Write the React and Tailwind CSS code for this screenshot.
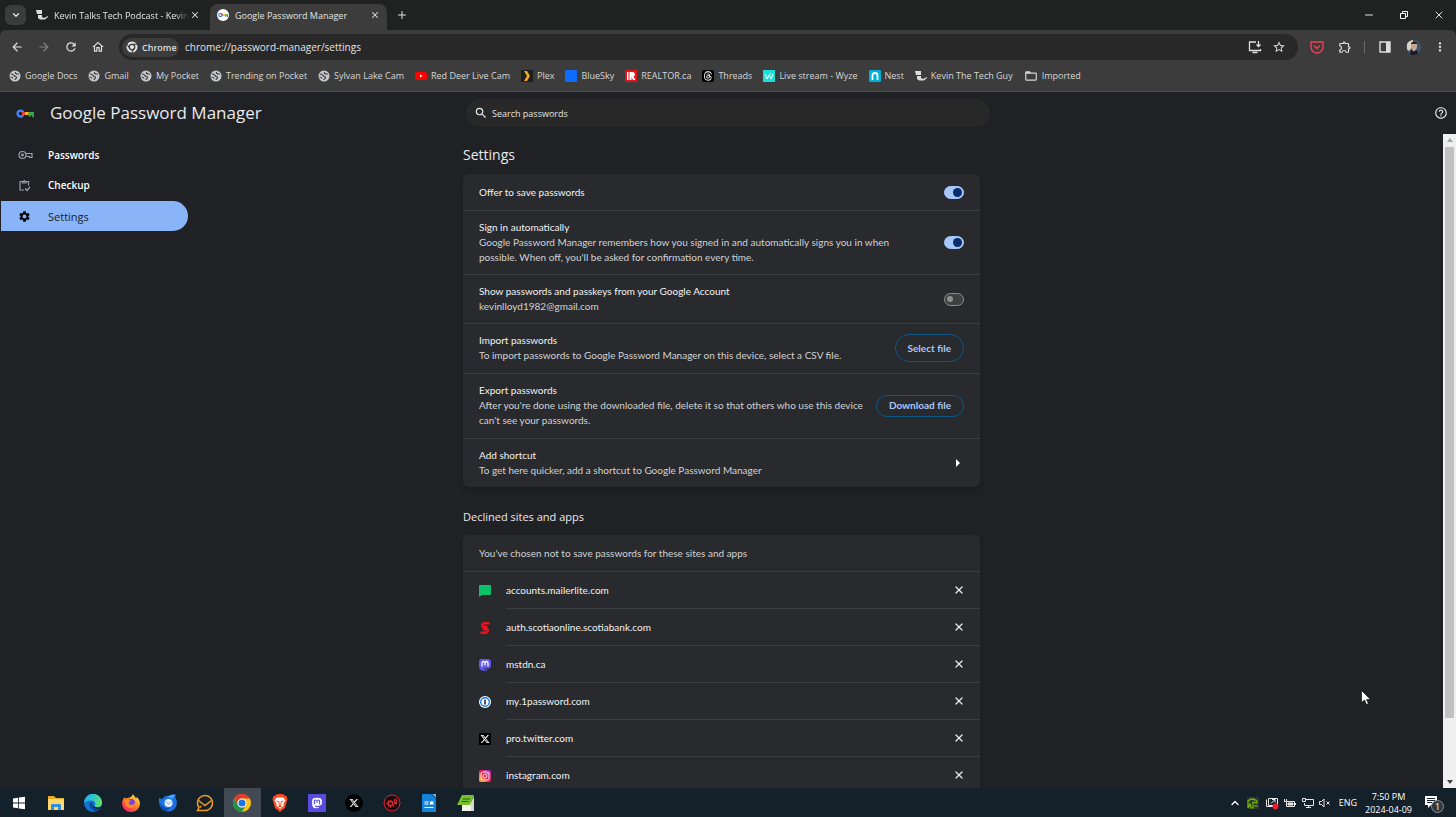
import React, { useState } from 'react';
import { ChevronDown, ChevronUp, Minus, Plus, X } from 'lucide-react';
import {
  MdArrowBack,
  MdArrowForward,
  MdFolderOpen,
  MdHelpOutline,
  MdMoreVert,
  MdOutlineExtension,
  MdOutlineHome,
  MdRefresh,
  MdSearch,
  MdSettings,
  MdStarBorder,
} from 'react-icons/md';
import { FaInstagram, FaMastodon, FaThreads, FaXTwitter } from 'react-icons/fa6';

/* ---------- site and app icons ---------- */

const GlobeIcon = () => (
  <svg viewBox="0 0 24 24" className="h-3 w-3 shrink-0">
    <circle cx="12" cy="12" r="11" fill="#c7c9cc" />
    <path d="M4 7c2 3 5 1 6 4s5 1 5 4-3 2-3 5M13 4c-1 3 1 4 4 4h3M3 14c2 0 4 0 5 3" fill="none" stroke="#3c3c3c" strokeWidth="2.400" />
  </svg>
);

const PodcastIcon = () => (
  <svg viewBox="0 0 12 12" className="h-3 w-3 shrink-0" fill="#dcdcdc">
    <path d="M0 1h6v4H1z" />
    <path d="M2 6h4v2l2 1 4-2v1L9 10.500H4L2 9z" />
  </svg>
);

const KeyLogo = ({ className }) => (
  <svg viewBox="0 0 24 12" className={className}>
    <circle cx="6" cy="6" r="4" fill="none" stroke="#4285f4" strokeWidth="3" />
    <path d="M8 4h4v4H8z" fill="#ea4335" />
    <path d="M12 4h5v4h-5z" fill="#fbbc04" />
    <path d="M17 4h7v7h-2.500V8H20v2h-3z" fill="#34a853" />
  </svg>
);

const ChromeMark = () => (
  <svg viewBox="0 0 24 24" className="h-3 w-3 shrink-0">
    <circle cx="12" cy="12" r="11" fill="#e3e3e3" />
    <circle cx="12" cy="12" r="5.500" fill="#e3e3e3" stroke="#3c3c3c" strokeWidth="2.500" />
    <path d="M12 6.500h10M7.200 14.500 2.300 6.500M16.800 14.500 11.500 23" stroke="#3c3c3c" strokeWidth="2.200" />
  </svg>
);

const YoutubeIcon = () => (
  <svg viewBox="0 0 12 12" className="h-3 w-3 shrink-0">
    <rect y="2" width="12" height="8" rx="2" fill="#f00" />
    <path d="M5 4.500v3L7.600 6z" fill="#fff" />
  </svg>
);

const PlexIcon = () => (
  <svg viewBox="0 0 12 12" className="h-3 w-3 shrink-0">
    <rect width="12" height="12" fill="#1f1f1f" />
    <path d="M3 1h3l3 5-3 5H3l3-5z" fill="#f5a623" />
  </svg>
);

const BlueSkyIcon = () => (
  <svg viewBox="0 0 12 12" className="h-3 w-3 shrink-0">
    <rect width="12" height="12" rx="1" fill="#0a6dff" />
  </svg>
);

const RealtorIcon = () => (
  <svg viewBox="0 0 12 12" className="h-3 w-3 shrink-0">
    <rect width="12" height="12" fill="#e4121b" />
    <path d="M2 2h1.500v8H2zM4.500 2h3a2.400 2.400 0 0 1 1 4.600L10.500 10H8L6.500 7v3h-2z" fill="#fff" />
  </svg>
);

const ThreadsIcon = () => (
  <span className="flex h-3 w-3 shrink-0 items-center justify-center rounded-xs bg-black">
    <FaThreads className="h-2.5 w-2.5 text-white" />
  </span>
);

const WyzeIcon = () => (
  <svg viewBox="0 0 12 12" className="h-3 w-3 shrink-0">
    <rect width="12" height="12" fill="#1ce0d8" />
    <path d="m2 4 2 5 2-4 2 4 2-5M6.500 4H8" fill="none" stroke="#fff" strokeWidth="1" />
  </svg>
);

const NestIcon = () => (
  <svg viewBox="0 0 12 12" className="h-3 w-3 shrink-0">
    <rect width="12" height="12" rx="1" fill="#00afd8" />
    <path d="M3.500 10V5.500a2.500 2.500 0 0 1 5 0V10" fill="none" stroke="#fff" strokeWidth="1.800" />
  </svg>
);

const MailerLiteIcon = () => (
  <svg viewBox="0 0 12 12" className="h-3 w-3">
    <path d="M1 0h10q1 0 1 1v8q0 1-1 1H3l-3 2V1q0-1 1-1z" fill="#09c269" />
  </svg>
);

const ScotiaIcon = () => (
  <svg viewBox="0 0 12 12" className="h-3 w-3">
    <path d="M10.500 0v2.500H6a2 2 0 0 0-2 2L3 6a4 4 0 0 1-1-3C2 1 4 0 6 0zM1.500 12V9.500H6a2 2 0 0 0 2-2L9 6a4 4 0 0 1 1 3c0 2-2 3-4 3z" fill="#ec111a" />
    <circle cx="6" cy="6" r="2.700" fill="#ec111a" />
  </svg>
);

const MstdnIcon = () => (
  <svg viewBox="0 0 12 12" className="h-3 w-3">
    <path d="M3 0h6q3 0 3 3v3.500q0 3-3 3H4.500q.5 1.500 4 1v1C4 12.500 0 12 0 7V3q0-3 3-3z" fill="#6157f0" />
    <path d="M3 7.500V4a1.500 1.500 0 0 1 3 0v2.500V4a1.500 1.500 0 0 1 3 0v3.500" fill="none" stroke="#fff" strokeWidth="1.300" />
  </svg>
);

const OnePasswordIcon = () => (
  <svg viewBox="0 0 12 12" className="h-3 w-3">
    <circle cx="6" cy="6" r="6" fill="#fff" />
    <circle cx="6" cy="6" r="4.300" fill="#fff" stroke="#1a7cd8" strokeWidth="1.400" />
    <rect x="5.200" y="3.500" width="1.600" height="5" rx=".5" fill="#1a2a4a" />
  </svg>
);

const XTileIcon = () => (
  <span className="flex h-3 w-3 items-center justify-center bg-black">
    <FaXTwitter className="h-2.5 w-2.5 text-white" />
  </span>
);

const InstagramTile = () => (
  <span className="flex h-3 w-3 items-center justify-center rounded-xs bg-linear-to-tr from-[#fdc136] via-[#f3134f] to-[#a91fd6]">
    <FaInstagram className="h-2.5 w-2.5 text-white" />
  </span>
);

const WindowsIcon = () => (
  <svg viewBox="0 0 14 14" className="h-3.5 w-3.5" fill="#fff">
    <path d="M1 2.500 6 1.700v4.900H1zM6.800 1.600 13 .7v5.900H6.800zM1 7.400h5v4.900l-5-.8zM6.800 7.400H13v5.900l-6.200-.9z" />
  </svg>
);

const ExplorerIcon = () => (
  <svg viewBox="0 0 18 18" className="h-4.5 w-4.5">
    <path d="M1 2h6l2 2h8v11H1z" fill="#e9a825" />
    <path d="M1 5h16v11H1z" fill="#ffd76b" />
    <path d="M4 16v-5q0-1 1-1h8q1 0 1 1v5h-3v-3H7v3z" fill="#2f8fe0" />
  </svg>
);

const EdgeIcon = () => (
  <svg viewBox="0 0 18 18" className="h-4.5 w-4.5">
    <defs>
      <linearGradient id="edgeTop" x1="0" y1="0" x2="1" y2="0.400">
        <stop offset="0" stopColor="#1ca7e8" />
        <stop offset="0.500" stopColor="#2bc3d2" />
        <stop offset="1" stopColor="#5fe06a" />
      </linearGradient>
    </defs>
    <circle cx="9" cy="9" r="9" fill="#1173cf" />
    <path d="M0 8.500A9 9 0 0 1 18 9c0 3-2.500 4-4.500 4S10 12 11 11c1-2-.5-4.500-4-4.500C3 6.500.5 8 0 9z" fill="url(#edgeTop)" />
    <path d="M6.500 8C4 11 6 16.500 12 17.300c2.400-.6 4-2 5-3.800-4 2-9.500.5-8.500-4.500z" fill="#0c4a9c" />
    <path d="M9 9.500c-.5 3 3 4.500 6 4 1.500-.2 2.600-1 3-2l-.7 2.300c-4 2.500-9.500.2-8.300-4.300z" fill="#101c25" />
  </svg>
);

const FirefoxIcon = () => (
  <svg viewBox="0 0 18 18" className="h-4.5 w-4.5">
    <defs>
      <linearGradient id="fox" x1="0.900" y1="0" x2="0.200" y2="1">
        <stop offset="0" stopColor="#fff44f" />
        <stop offset="0.450" stopColor="#ff9020" />
        <stop offset="1" stopColor="#f5156c" />
      </linearGradient>
    </defs>
    <path d="M11 0c.5 2 2.500 2.500 3 4.500L15 3c2 2.500 3 4.500 3 6.500A8.700 8.700 0 0 1 9 18a8.700 8.700 0 0 1-9-8.500C0 7 1 4.500 3 3v1.500L5.500 4C7 4 10 3 11 0z" fill="url(#fox)" />
    <circle cx="9" cy="9" r="4" fill="#7542e5" />
    <path d="M3 6c2-1 4-.5 6 1L6.500 8.500C7 11 10 12 13 9c0 4-3 5.500-5.500 5C4.500 13.500 2.500 10 3 6z" fill="#ff8a1f" />
  </svg>
);

const ThunderbirdIcon = () => (
  <svg viewBox="0 0 18 18" className="h-4.5 w-4.5">
    <path d="M0 4c1 0 2 .5 2.500 1.500C5 2 8 1 10 2c2-2 5-2 7.500-1-1 .5-1.500 1-1.500 2C19 7 18 12 15.500 15A9 9 0 0 1 1 12C-.2 9-.5 6 0 4z" fill="#1b72e0" />
    <path d="M8 3c3-2.500 6-2.500 9-1.500-2 .5-3 2-3 3.500-2-1-4-1.500-6-2z" fill="#4ba6f5" />
    <circle cx="9.500" cy="9" r="4" fill="#e9f1fc" />
    <path d="m6.500 7.500 3 2.500 3-2.500" fill="none" stroke="#9cc4f2" strokeWidth="1.200" />
    <path d="M1 8c1 5 6 7 10 5.500-1 2-2 3-4 3.500C3.500 16 1 13 1 8z" fill="#0b4bae" />
  </svg>
);

const EmClientIcon = () => (
  <svg viewBox="0 0 18 18" className="h-4.5 w-4.5" fill="none" stroke="#f29a1e" strokeWidth="1.500">
    <path d="M3 13.500A7.500 7.500 0 1 1 9 16.500H1.500z" />
    <path d="m2.500 6.500 6.500 5 6.500-5M5 12l-1 1.500" />
  </svg>
);

const ChromeIcon = () => (
  <svg viewBox="0 0 18 18" className="h-4.5 w-4.5">
    <circle cx="9" cy="9" r="9" fill="#fbc116" />
    <path d="M1.200 4.500A9 9 0 0 1 16.800 4.500H9A4.500 4.500 0 0 0 5.100 11.250z" fill="#e33b2e" />
    <path d="M1.200 4.500A9 9 0 0 0 9 18l3.900-6.750a4.500 4.500 0 0 1-7.800 0z" fill="#229342" />
    <circle cx="9" cy="9" r="4.500" fill="#fff" />
    <circle cx="9" cy="9" r="3.500" fill="#1a73e8" />
  </svg>
);

const BraveIcon = () => (
  <svg viewBox="0 0 18 18" className="h-4.5 w-4.5">
    <path d="M6 0h6l1.500 1.500L15.500 2l1 3-.5 2-2 7-5 4-5-4-2-7-.5-2 1-3 2-.5z" fill="#fb4a1f" />
    <path d="M5.500 3.500h7l2 3-2 3v2.500L9 15l-3.500-3V9.500l-2-3z" fill="#fff" />
    <path d="m5.500 7 2.500.8v2L9 12l1-2.200v-2l2.500-.8M7 12.500h4" fill="none" stroke="#fb4a1f" strokeWidth="1" />
  </svg>
);

const MastodonTile = () => (
  <span className="flex h-4.5 w-4.5 items-center justify-center bg-[#5a4be0]">
    <FaMastodon className="h-3 w-3 text-white" />
  </span>
);

const XCircle = () => (
  <span className="flex h-4.5 w-4.5 items-center justify-center rounded-full bg-black">
    <FaXTwitter className="h-2.5 w-2.5 text-white" />
  </span>
);

const RedGearIcon = () => (
  <svg viewBox="0 0 18 18" className="h-4.5 w-4.5" fill="none" stroke="#e0262f">
    <circle cx="9" cy="9" r="8" fill="#1c0c10" strokeWidth="1" />
    <circle cx="7.500" cy="9.500" r="2.200" strokeWidth="1.400" />
    <circle cx="12.500" cy="7" r="1.300" strokeWidth="1.200" />
    <path d="M7.500 6v1M7.500 12v1.500M3.500 9.500h1.500M4.800 6.800l.8.800M5 12.300l.8-.8M10 11.500l1 1M11 9.500h3M12.500 4.500v1" strokeWidth="1.400" />
  </svg>
);

const WriterIcon = () => (
  <svg viewBox="0 0 18 18" className="h-4.5 w-4.5">
    <path d="M2 1q0-1 1-1h8l5 5v12q0 1-1 1H3q-1 0-1-1z" fill="#1583d8" />
    <path d="m12 0 4 4V0z" fill="#5cb8f5" />
    <path d="M4.500 8h4M4.500 10h4M4.500 13.500h9" stroke="#fff" strokeWidth="1.200" />
    <path d="M10 7.500h3.500v3H10z" fill="#fff" />
  </svg>
);

const NotesIcon = () => (
  <svg viewBox="0 0 18 18" className="h-4.5 w-4.5">
    <path d="M5 8h11v9H5z" fill="#f3f3ea" />
    <path d="M14 17V8l3-6v15z" fill="#d5d5cc" />
    <path d="M5 1h12l-4 10H0z" fill="#76c02e" />
    <path d="M6 5h7M4.500 7.500h7" stroke="#2e5f12" strokeWidth="1" />
  </svg>
);

/* ---------- data ---------- */

const BOOKMARKS = [
  { label: 'Google Docs', icon: GlobeIcon },
  { label: 'Gmail', icon: GlobeIcon },
  { label: 'My Pocket', icon: GlobeIcon },
  { label: 'Trending on Pocket', icon: GlobeIcon },
  { label: 'Sylvan Lake Cam', icon: GlobeIcon },
  { label: 'Red Deer Live Cam', icon: YoutubeIcon },
  { label: 'Plex', icon: PlexIcon },
  { label: 'BlueSky', icon: BlueSkyIcon },
  { label: 'REALTOR.ca', icon: RealtorIcon },
  { label: 'Threads', icon: ThreadsIcon },
  { label: 'Live stream - Wyze', icon: WyzeIcon },
  { label: 'Nest', icon: NestIcon },
  { label: 'Kevin The Tech Guy', icon: PodcastIcon },
];

const DECLINED_SITES = [
  { host: 'accounts.mailerlite.com', icon: <MailerLiteIcon /> },
  { host: 'auth.scotiaonline.scotiabank.com', icon: <ScotiaIcon /> },
  { host: 'mstdn.ca', icon: <MstdnIcon /> },
  { host: 'my.1password.com', icon: <OnePasswordIcon /> },
  { host: 'pro.twitter.com', icon: <XTileIcon /> },
  { host: 'instagram.com', icon: <InstagramTile /> },
];

const TASKBAR_APPS = [
  { name: 'Start', icon: WindowsIcon },
  { name: 'File Explorer', icon: ExplorerIcon },
  { name: 'Edge', icon: EdgeIcon },
  { name: 'Firefox', icon: FirefoxIcon },
  { name: 'Thunderbird', icon: ThunderbirdIcon },
  { name: 'eM Client', icon: EmClientIcon },
  { name: 'Chrome', icon: ChromeIcon, active: true },
  { name: 'Brave', icon: BraveIcon },
  { name: 'Mastodon', icon: MastodonTile },
  { name: 'X', icon: XCircle },
  { name: 'Settings tool', icon: RedGearIcon },
  { name: 'Writer', icon: WriterIcon },
  { name: 'Notes', icon: NotesIcon },
];

/* ---------- browser chrome ---------- */

const TabStrip = () => (
  <div className="flex h-[30px] shrink-0 items-end justify-between bg-[#202121] text-[9px] text-[#e3e3e3]">
    <div className="flex h-full items-end">
      <button aria-label="Search tabs" className="mb-[5px] ml-[5px] flex h-5 w-[21px] items-center justify-center rounded-md bg-[#3c3c3c]">
        <ChevronDown className="h-2.5 w-2.5" strokeWidth={3} />
      </button>
      <div className="flex h-[30px] w-[184px] items-center pl-2.5">
        <PodcastIcon />
        <span className="ml-1.5 mask-r-from-90% whitespace-nowrap">Kevin Talks Tech Podcast - Kevin</span>
        <button aria-label="Close tab" className="ml-px">
          <X className="h-2.5 w-2.5" strokeWidth={2.5} />
        </button>
      </div>
      <div className="flex h-[26px] w-[177px] items-center gap-1.5 rounded-t-lg bg-[#3c3c3c] px-[7px] pb-1">
        <span className="flex h-3 w-3 shrink-0 items-center justify-center rounded-full bg-white">
          <KeyLogo className="h-1.5 w-2.5" />
        </span>
        <span className="whitespace-nowrap">Google Password Manager</span>
        <button aria-label="Close tab" className="ml-auto">
          <X className="h-2.5 w-2.5" strokeWidth={2.5} />
        </button>
      </div>
      <button aria-label="New tab" className="flex h-[30px] w-[30px] items-center justify-center">
        <Plus className="h-3 w-3" strokeWidth={2} />
      </button>
    </div>
    <div className="flex h-[30px] items-center">
      <button aria-label="Minimize" className="flex w-[35px] justify-center"><Minus className="h-3 w-3" /></button>
      <button aria-label="Restore" className="flex w-[35px] justify-center">
        <svg viewBox="0 0 10 10" className="h-2.5 w-2.5" fill="none" stroke="#fff">
          <path d="M1.500 3.500h5v5h-5zM3.500 3V1.500h5v5H7" />
        </svg>
      </button>
      <button aria-label="Close window" className="flex w-[35px] justify-center"><X className="h-3 w-3" strokeWidth={2} /></button>
    </div>
  </div>
);

const Toolbar = () => (
  <div className="flex h-[34px] shrink-0 items-center pr-[9px] pl-[3px] text-[#dedede]">
    <div className="flex w-[116px] items-center">
      <button aria-label="Back" className="flex w-[27px] justify-center"><MdArrowBack className="h-3.5 w-3.5" /></button>
      <button aria-label="Forward" className="flex w-[27px] justify-center text-[#808080]"><MdArrowForward className="h-3.5 w-3.5" /></button>
      <button aria-label="Reload" className="flex w-[27px] justify-center"><MdRefresh className="h-3.5 w-3.5" /></button>
      <button aria-label="Home" className="flex w-[27px] justify-center"><MdOutlineHome className="h-3.5 w-3.5" /></button>
    </div>
    <div className="flex h-[26px] flex-1 items-center rounded-full bg-[#282828] pr-3 pl-[3px]">
      <span className="flex h-[19px] w-[57px] items-center gap-1 rounded-full bg-[#3c3c3c] pl-1 text-[9px] font-semibold">
        <ChromeMark />
        Chrome
      </span>
      <input aria-label="Address" defaultValue="chrome://password-manager/settings" className="ml-1.5 min-w-0 flex-1 bg-transparent text-[#e3e3e3] outline-none" />
      <button aria-label="Install app" className="mr-2.5">
        <svg viewBox="0 0 14 14" className="h-3.5 w-3.5" fill="none" stroke="currentColor" strokeWidth="1.300">
          <path d="M8 2H1.500v8.500h11V9M4.500 12.500h5M10.500 1v5M8.500 4.500l2 2 2-2" />
        </svg>
      </button>
      <button aria-label="Bookmark this tab"><MdStarBorder className="h-3.5 w-3.5" /></button>
    </div>
    <div className="flex items-center pl-3">
      <button aria-label="Save to Pocket">
        <svg viewBox="0 0 14 14" className="h-3.5 w-3.5" fill="none" stroke="#ef4056" strokeWidth="1.400">
          <path d="M1 2h12v5a6 6 0 0 1-12 0zM4 5.500l3 3 3-3" />
        </svg>
      </button>
      <button aria-label="Extensions" className="ml-3.5"><MdOutlineExtension className="h-3.5 w-3.5" /></button>
      <span className="ml-3 h-3 w-px bg-[#6a6a6a]" />
      <button aria-label="Side panel" className="ml-3.5">
        <svg viewBox="0 0 12 12" className="h-3 w-3">
          <path d="M1 1h10v10H1z" fill="none" stroke="#dedede" strokeWidth="1.400" />
          <path d="M7 1h4v10H7z" fill="#dedede" />
        </svg>
      </button>
      <button aria-label="Profile" className="ml-[15px]">
        <svg viewBox="0 0 15 15" className="h-[15px] w-[15px]">
          <circle cx="7.500" cy="7.500" r="7.500" fill="#43536a" />
          <path d="M1 4a7.500 7.500 0 0 1 6-4v6L3 11 1 9z" fill="#d8d5c8" />
          <path d="M5 4q3-3 6 0v3q-1 4-3 4T5 7z" fill="#c9a593" />
          <path d="M5 3q3-3 6 0v1H5z" fill="#2a2626" />
          <path d="M4 14q0-3 2-4l2 2 2-2q2 1 2 3.500a7.500 7.500 0 0 1-8 .5z" fill="#161b29" />
        </svg>
      </button>
      <button aria-label="More" className="ml-3"><MdMoreVert className="h-3.5 w-3.5" /></button>
    </div>
  </div>
);

const BookmarksBar = () => (
  <nav className="flex h-7 shrink-0 items-center gap-[11px] border-b border-[#4a4a4a] px-[9px] pb-1 text-[9px] text-[#d6d6d6]">
    {BOOKMARKS.map(({ label, icon: Icon }) => (
      <a key={label} href="#" className="flex items-center gap-1 whitespace-nowrap">
        <Icon />
        {label}
      </a>
    ))}
    <a href="#" className="flex items-center gap-1 whitespace-nowrap">
      <MdFolderOpen className="h-3.5 w-3.5" />
      Imported
    </a>
  </nav>
);

/* ---------- password manager page ---------- */

const PageHeader = () => (
  <header className="grid h-[42px] shrink-0 grid-cols-[1fr_524px_1fr] items-center">
    <div className="flex items-center gap-4 pl-4">
      <KeyLogo className="h-[9px] w-[18px]" />
      <h1 className="text-[17px] leading-6 whitespace-nowrap text-[#e8eaed]">Google Password Manager</h1>
    </div>
    <label className="flex h-7 items-center gap-1 rounded-full bg-[#282828] px-2">
      <MdSearch className="h-3.5 w-3.5" />
      <input type="search" placeholder="Search passwords" aria-label="Search passwords" className="flex-1 bg-transparent text-[9px] font-medium outline-none placeholder:text-[#e3e3e3]" />
    </label>
    <button aria-label="Help" className="mr-2 justify-self-end"><MdHelpOutline className="h-3.5 w-3.5" /></button>
  </header>
);

const Sidebar = () => (
  <nav className="flex w-[188px] flex-col pt-1.5 font-semibold text-white">
    <a href="#" className="flex h-[30px] items-center pl-[18px]">
      <svg viewBox="0 0 15 10" className="mr-[15px] h-2.5 w-[15px]" fill="none" stroke="#9aa0a6" strokeWidth="1.200">
        <circle cx="4.500" cy="5" r="3.500" />
        <circle cx="4.500" cy="5" r=".8" fill="#9aa0a6" />
        <path d="M8 3.500h6v4h-2.500V6.500H8" />
      </svg>
      Passwords
    </a>
    <a href="#" className="flex h-[31px] items-center pl-[18px]">
      <svg viewBox="0 0 14 14" className="mr-4 h-3.5 w-3.5" fill="none" stroke="#9aa0a6" strokeWidth="1.200">
        <path d="M10.500 6.500V2.500H2v8.500h4M4.500 2v2H8V2M5.500 1.500H7M7 9.500l2 2 3-3.500" />
      </svg>
      Checkup
    </a>
    <a href="#" className="ml-px flex h-[30px] items-center rounded-r-full bg-[#8ab4f8] pl-[17px] text-[11px] font-normal text-[#202124]">
      <MdSettings className="mr-[17px] h-[13px] w-[13px] text-black" />
      Settings
    </a>
  </nav>
);

const Toggle = ({ id, defaultChecked }) => {
  const [on, setOn] = useState(defaultChecked);
  return (
    <input
      id={id}
      type="checkbox"
      role="switch"
      checked={on}
      onChange={() => setOn(!on)}
      className="flex h-[13px] w-5 shrink-0 appearance-none items-center rounded-full border border-[#8e918f] bg-[#3f4042] px-0.5 before:h-1.5 before:w-1.5 before:rounded-full before:bg-[#8e918f] checked:justify-end checked:border-[#a8c7fa] checked:bg-[#a8c7fa] checked:px-px checked:before:h-[9px] checked:before:w-[9px] checked:before:bg-[#062e6f]"
    />
  );
};

const SettingRow = ({ title, sub, htmlFor, roomy, children }) => {
  const Title = htmlFor ? 'label' : 'div';
  return (
    <div className={`flex min-h-[37px] items-center justify-between border-b border-[#3c3d40] px-4 pt-[9px] last:border-b-0 ${roomy ? 'pb-2.5' : 'pb-[9px]'}`}>
      <div>
        <Title htmlFor={htmlFor} className="block text-[#f1f3f4]">{title}</Title>
        {sub && <div className="whitespace-pre-line text-[#d0d2d5]">{sub}</div>}
      </div>
      {children}
    </div>
  );
};

const SettingsCard = () => (
  <section className="rounded-md bg-[#292a2d] shadow-md">
    <SettingRow title="Offer to save passwords" htmlFor="offer">
      <Toggle id="offer" defaultChecked />
    </SettingRow>
    <SettingRow
      title="Sign in automatically"
      htmlFor="signin"
      sub={"Google Password Manager remembers how you signed in and automatically signs you in when\npossible. When off, you'll be asked for confirmation every time."}
    >
      <Toggle id="signin" defaultChecked />
    </SettingRow>
    <SettingRow title="Show passwords and passkeys from your Google Account" htmlFor="account" sub="kevinlloyd1982@gmail.com">
      <Toggle id="account" defaultChecked={false} />
    </SettingRow>
    <SettingRow roomy title="Import passwords" sub="To import passwords to Google Password Manager on this device, select a CSV file.">
      <button className="h-7 shrink-0 rounded-full border border-[#0b578a] px-3 font-bold text-[#a8c7fa]">Select file</button>
    </SettingRow>
    <SettingRow
      roomy
      title="Export passwords"
      sub={"After you're done using the downloaded file, delete it so that others who use this device\ncan't see your passwords."}
    >
      <button className="h-[22px] shrink-0 rounded-full border border-[#0b578a] px-3 font-bold text-[#a8c7fa]">Download file</button>
    </SettingRow>
    <SettingRow title="Add shortcut" sub="To get here quicker, add a shortcut to Google Password Manager">
      <button aria-label="Add shortcut" className="mr-1">
        <svg viewBox="0 0 4 8" className="h-2 w-1" fill="#fff"><path d="M0 0v8l4-4z" /></svg>
      </button>
    </SettingRow>
  </section>
);

const DeclinedCard = () => (
  <section className="rounded-t-md bg-[#292a2d] shadow-md">
    <p className="flex h-[37px] items-center border-b border-[#3c3d40] px-4 text-[#d0d2d5]">
      You've chosen not to save passwords for these sites and apps
    </p>
    <ul>
      {DECLINED_SITES.map(({ host, icon }) => (
        <li key={host} className="flex h-[37px] items-center pl-4">
          <span className="w-[27px]">{icon}</span>
          <div className="flex h-full flex-1 items-center justify-between border-b border-[#3c3d40] pr-[15px]">
            <span className="text-[#f1f3f4]">{host}</span>
            <button aria-label={`Remove ${host}`}><X className="h-3 w-3" strokeWidth={2.5} /></button>
          </div>
        </li>
      ))}
    </ul>
  </section>
);

const Scrollbar = () => (
  <div className="flex w-[13px] shrink-0 flex-col items-center bg-[#f0f0f0] py-1">
    <svg viewBox="0 0 6 4" className="h-1 w-1.5 shrink-0"><path d="M0 4h6L3 0z" fill="#a3a3a3" /></svg>
    <div className="my-[5px] flex w-full flex-1 flex-col px-0.5">
      <div className="h-[91%] bg-[#c1c1c1]" />
    </div>
    <svg viewBox="0 0 6 4" className="h-1 w-1.5 shrink-0"><path d="M0 0h6L3 4z" fill="#404040" /></svg>
  </div>
);

/* ---------- taskbar ---------- */

const Taskbar = () => (
  <footer className="flex h-[29px] shrink-0 items-stretch justify-between bg-[#14202a] text-[9px] text-white">
    <div className="grid w-[485px] grid-cols-13">
      {TASKBAR_APPS.map(({ name, icon: Icon, active }) => (
        <button key={name} aria-label={name} className={`flex items-center justify-center ${active ? 'bg-[#414a52]' : ''}`}>
          <Icon />
        </button>
      ))}
    </div>
    <div className="flex items-center pr-3">
      <ChevronUp className="mr-1.5 h-3 w-3" strokeWidth={2.5} />
      <svg viewBox="0 0 12 12" className="mr-1.5 h-3 w-3">
        <rect width="12" height="12" fill="#2c3338" />
        <path d="M1 4q4-4 9 0v2L6 5v6H4L3 7l-2 4zM7 9h4" fill="none" stroke="#76b900" strokeWidth="1.200" />
      </svg>
      <svg viewBox="0 0 14 14" className="mr-1 h-3.5 w-3.5" fill="none" stroke="#e6e6e6">
        <path d="M1.500 3.500v7h8M3.500 2.500h9v7h-9zM6 7.500l4-4M7 3.500h3v3" />
        <circle cx="10.500" cy="10.500" r="3" fill="#f01c2b" stroke="none" />
      </svg>
      <svg viewBox="0 0 14 12" className="mr-1 h-3 w-3.5" fill="none" stroke="#e6e6e6">
        <path d="M3.500 4.500h8v5h-8zM12.500 6v2M1.500 2v3M3.500 2v2M1 4.500h2.500" />
        <path d="M5 6h5v2H5z" fill="#e6e6e6" />
      </svg>
      <svg viewBox="0 0 14 12" className="mr-1 h-3 w-3.5" fill="none" stroke="#e6e6e6">
        <path d="M5 2.500h7.500v6h-9V6M7.500 8.500v2M5 10.500h5M1.500 1.500h3v3h-3z" />
      </svg>
      <svg viewBox="0 0 12 12" className="mr-2 h-3 w-3" fill="none" stroke="#e6e6e6">
        <path d="M.5 4.500h2l2.500-2.500v8L2.500 7.500h-2zM7.500 4.500l3 3M10.500 4.500l-3 3" />
      </svg>
      <span className="mr-2">ENG</span>
      <div className="text-center leading-[13px]">
        <div>7:50 PM</div>
        <div>2024-04-09</div>
      </div>
      <svg viewBox="0 0 20 20" className="ml-3 h-5 w-5">
        <path d="M1 3h12v9H7l-3 3v-3H1z" fill="#fff" />
        <path d="M3 5.500h8M3 7.500h8M3 9.500h5" stroke="#14202a" />
        <circle cx="13.500" cy="13.500" r="6" fill="#31393f" stroke="#8b9196" />
        <text x="13.500" y="17" fontSize="9" textAnchor="middle" fill="#fff">1</text>
      </svg>
    </div>
  </footer>
);

export default function App() {
  return (
    <div className="flex h-screen flex-col overflow-hidden bg-[#202124] font-['Open_Sans',sans-serif] text-[10px] leading-[15px] text-[#e8eaed]">
      <TabStrip />
      <div className="shrink-0 bg-[#202121]">
        <div className="rounded-t-md bg-[#3c3c3c]">
          <Toolbar />
          <BookmarksBar />
        </div>
      </div>
      <PageHeader />
      <div className="flex min-h-0 flex-1">
        <div className="grid flex-1 grid-cols-[1fr_517px_1fr] overflow-hidden">
          <Sidebar />
          <main className="pt-[11px] font-['Lato',sans-serif]">
            <h2 className="mb-[9px] font-['Open_Sans',sans-serif] text-sm leading-5">Settings</h2>
            <SettingsCard />
            <h3 className="mt-6 mb-3 font-['Open_Sans',sans-serif] text-[11px] leading-3">Declined sites and apps</h3>
            <DeclinedCard />
          </main>
        </div>
        <Scrollbar />
      </div>
      <Taskbar />

      {/* mouse pointer */}
      <svg viewBox="0 0 10 16" className="pointer-events-none absolute top-[690px] left-[1361px] h-4 w-2.5">
        <path d="M.5.5v12l3-2.500 2 4.500 2-1-2-4H9.500z" fill="#fff" stroke="#000" strokeWidth=".6" />
      </svg>
    </div>
  );
}
